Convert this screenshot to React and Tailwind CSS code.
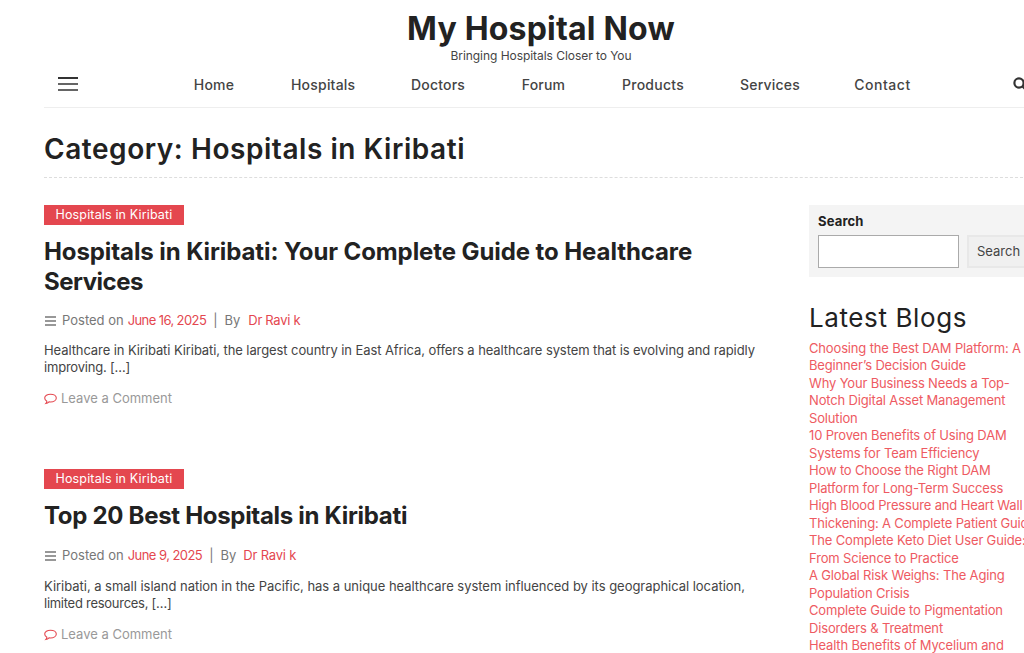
import React from "react";

const NAV = [
  ["Home", "w-[42px]", "tracking-[0.2px]"],
  ["Hospitals", "w-[64px]", "tracking-[0.2px]"],
  ["Doctors", "w-[54px]", "tracking-[0.2px]"],
  ["Forum", "w-[45px]", "tracking-[0.2px]"],
  ["Products", "w-[62px]", "tracking-[0.25px]"],
  ["Services", "w-[58px]", "tracking-[0.2px]"],
  ["Contact", "w-[57px]", "tracking-[0.55px]"],
];

const BLOGS = [
  ["Choosing the Best DAM Platform: A", "Beginner’s Decision Guide"],
  ["Why Your Business Needs a Top-", "Notch Digital Asset Management", "Solution"],
  ["10 Proven Benefits of Using DAM", "Systems for Team Efficiency"],
  ["How to Choose the Right DAM", "Platform for Long-Term Success"],
  ["High Blood Pressure and Heart Wall", "Thickening: A Complete Patient Guide"],
  ["The Complete Keto Diet User Guide:", "From Science to Practice"],
  ["A Global Risk Weighs: The Aging", "Population Crisis"],
  ["Complete Guide to Pigmentation", "Disorders & Treatment"],
  ["Health Benefits of Mycelium and"],
];

function Lines() {
  return (
    <svg width="11" height="10" viewBox="0 0 11 10" fill="none" stroke="#777" strokeWidth="1.500" className="shrink-0 ml-[0.5px]">
      <path d="M0 1h11M0 5h11M0 9h11" />
    </svg>
  );
}

function Bubble() {
  return (
    <svg width="13" height="12" viewBox="0 0 13 12" fill="none" stroke="#e4474f" strokeWidth="1.100" className="shrink-0">
      <path d="M6.500 1.200c3.200 0 5.800 1.700 5.800 3.900S9.700 9 6.500 9c-.5 0-1 0-1.500-.1-.8.8-1.900 1.400-3.200 1.600.6-.7 1-1.400 1.100-2.200C1.500 7.600.7 6.400.7 5.100c0-2.200 2.600-3.900 5.800-3.900z" />
    </svg>
  );
}

function Post({ title, date, dateClass, authorClass, body, gapClass, titleExtra, bodyMt }) {
  return (
    <article className={gapClass}>
      <div className="h-[20px] w-[140px] bg-[#e4474f] text-[#fff] text-[12.5px] leading-[20px] text-center tracking-[0.15px]">
        Hospitals in Kiribati
      </div>
      <h2 className={`mt-[12px] text-[24px] leading-[30px] font-bold text-[#222] ${titleExtra}`}>
        {title.map(([t, cls]) => (
          <div key={t} className={`whitespace-nowrap ${cls}`}>{t}</div>
        ))}
      </h2>
      <div className="mt-[14px] flex items-center h-[20px] text-[13px] text-[#777] whitespace-nowrap">
        <Lines />
        <span className="ml-[6.5px]">Posted on</span>
        <span className={dateClass}>{date}</span>
        <span className="ml-[7px]">|</span>
        <span className="ml-[7px]">By</span>
        <span className={authorClass}>Dr Ravi k</span>
      </div>
      <div className={`${bodyMt} text-[13px] leading-[17px] text-[#444] whitespace-nowrap`}>
        {body.map(([b, cls]) => (
          <div key={b} className={cls}>{b}</div>
        ))}
      </div>
      <div className="mt-[14px] flex items-center gap-[4px] h-[18px] text-[13px] text-[#999]">
        <Bubble />
        <span>Leave a Comment</span>
      </div>
    </article>
  );
}

export default function App() {
  return (
    <div className="h-[653px] w-[1024px] overflow-hidden bg-white font-['Inter','Liberation_Sans',sans-serif]">
      <div className="w-[994px] ml-[44px]">
        <header className="h-[108px] border-b border-[#eee] flex flex-col items-center">
          <h1 className="mt-[10px] h-[37px] text-[32px] leading-[38px] font-bold text-[#222] whitespace-nowrap tracking-[0.2px]">My Hospital Now</h1>
          <p className="h-[17px] text-[12px] leading-[17px] text-[#444] whitespace-nowrap tracking-[-0.05px]">Bringing Hospitals Closer to You</p>
          <nav className="mt-[10px] w-full h-[20px] flex items-center text-[14px] font-medium text-[#444]">
            <svg className="ml-[14px] shrink-0" width="20" height="14" viewBox="0 0 20 14" fill="none" stroke="#333">
              <path strokeWidth="2" d="M0 1h20" />
              <path strokeWidth="1.500" d="M0 7h20M0 13h20" />
            </svg>
            <div className="ml-[115px] flex gap-[56px]">
              {NAV.map(([n, w, t]) => (
                <span key={n} className={`${w} ${t} whitespace-nowrap text-center`}>{n}</span>
              ))}
            </div>
            <svg className="ml-[102px] shrink-0" width="14" height="14" viewBox="0 0 14 14" fill="none" stroke="#333" strokeWidth="2.200">
              <circle cx="6" cy="6" r="4.600" />
              <path d="M9.500 9.500L13 13" />
            </svg>
          </nav>
        </header>

        <div className="h-[70px] border-b border-dashed border-[#ddd]">
          <h1 className="pt-[21px] text-[28px] leading-[40px] font-semibold text-[#222] whitespace-nowrap tracking-[0.55px]">Category: Hospitals in Kiribati</h1>
        </div>

        <div className="flex">
          <main className="w-[765px]">
            <Post
              gapClass="pt-[27px]"
              title={[
                ["Hospitals in Kiribati: Your Complete Guide to Healthcare", "tracking-[-0.09px]"],
                ["Services", "tracking-[-0.5px]"],
              ]}
              date="June 16, 2025"
              dateClass="ml-[4px] text-[#e4474f] tracking-[-0.6px]"
              authorClass="ml-[8px] text-[#e4474f] tracking-[-0.3px]"
              bodyMt="mt-[11px]"
              titleExtra=""
              body={[
                ["Healthcare in Kiribati Kiribati, the largest country in East Africa, offers a healthcare system that is evolving and rapidly", "tracking-[-0.09px]"],
                ["improving. […]", "tracking-[-0.2px]"],
              ]}
            />
            <Post
              gapClass="pt-[61px]"
              title={[["Top 20 Best Hospitals in Kiribati", "tracking-[-0.3px]"]]}
              date="June 9, 2025"
              dateClass="ml-[4px] text-[#e4474f] tracking-[-0.55px]"
              authorClass="ml-[7px] text-[#e4474f] tracking-[-0.2px]"
              bodyMt="mt-[12px]"
              titleExtra="h-[31px]"
              body={[
                ["Kiribati, a small island nation in the Pacific, has a unique healthcare system influenced by its geographical location,", "tracking-[-0.03px]"],
                ["limited resources, […]", "tracking-[-0.27px]"],
              ]}
            />
          </main>
          <aside className="w-[229px] pt-[27px]">
            <div className="h-[72px] bg-[#f4f4f4] px-[9px] pt-[8px]">
              <div className="h-[17px] text-[13px] leading-[17px] font-bold text-[#222] tracking-[0.15px]">Search</div>
              <div className="mt-[5px] flex gap-[8px]">
                <div className="w-[141px] h-[33px] shrink-0 bg-white border border-[#aaa]" />
                <div className="w-[70px] h-[33px] shrink-0 bg-[#f0f0f0] border-2 border-[#e8e8e8] text-[13px] leading-[29px] text-[#444] pl-[8px]">Search</div>
              </div>
            </div>
            <h2 className="mt-[23px] h-[36px] text-[26px] leading-[36px] font-normal text-[#222] whitespace-nowrap tracking-[0.6px]">Latest Blogs</h2>
            <ul className="mt-[3.6px] text-[13px] leading-[17.5px] text-[#ee5a62] whitespace-nowrap tracking-[-0.16px]">
              {BLOGS.map((lines) => (
                <li key={lines[0]}>
                  {lines.map((l) => (
                    <div key={l}>{l}</div>
                  ))}
                </li>
              ))}
            </ul>
          </aside>
        </div>
      </div>
    </div>
  );
}
